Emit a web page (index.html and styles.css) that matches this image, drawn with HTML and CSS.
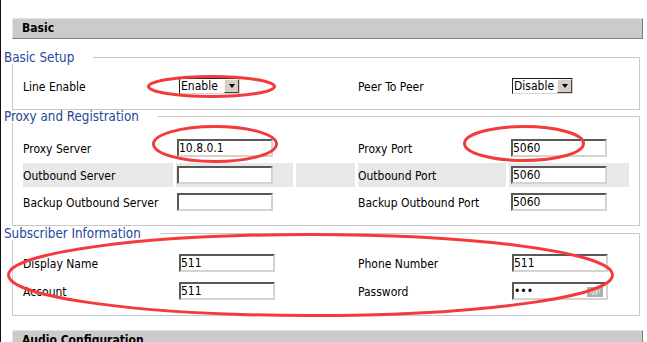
FILE: index.html
```html
<!DOCTYPE html>
<html lang="en">
  <head>
    <meta charset="UTF-8" />
    <meta name="viewport" content="width=device-width, initial-scale=1.0" />
    <title>Line Settings</title>
    <link rel="stylesheet" href="styles.css">
  </head>
  <body>
    <div class="page">
      <div class="bar">Basic</div>

      <!-- Basic setup -->
      <fieldset class="group">
        <legend>Basic Setup</legend>
        <table class="form">
          <colgroup>
            <col class="col-label"><col class="col-field"><col class="col-gap"><col class="col-label2"><col class="col-field2">
          </colgroup>
          <tr>
            <td class="label">Line Enable</td>
            <td class="field">
              <span class="combo"><span class="combo-value">Enable</span><span class="combo-btn"><span class="combo-arrow"></span></span></span>
            </td>
            <td></td>
            <td class="label">Peer To Peer</td>
            <td class="field">
              <span class="combo"><span class="combo-value">Disable</span><span class="combo-btn"><span class="combo-arrow"></span></span></span>
            </td>
          </tr>
        </table>
      </fieldset>

      <!-- Proxy and registration -->
      <fieldset class="group group-proxy">
        <legend>Proxy and Registration</legend>
        <table class="form form-proxy">
          <colgroup>
            <col class="col-label"><col class="col-field"><col class="col-gap"><col class="col-label2"><col class="col-field2">
          </colgroup>
          <tr>
            <td class="label">Proxy Server</td>
            <td class="field"><input class="text" type="text" value="10.8.0.1"></td>
            <td></td>
            <td class="label">Proxy Port</td>
            <td class="field"><input class="text" type="text" value="5060"></td>
          </tr>
          <tr class="alt">
            <td class="label">Outbound Server</td>
            <td class="field"><input class="text" type="text" value=""></td>
            <td></td>
            <td class="label">Outbound Port</td>
            <td class="field"><input class="text" type="text" value="5060"></td>
          </tr>
          <tr>
            <td class="label">Backup Outbound Server</td>
            <td class="field"><input class="text" type="text" value=""></td>
            <td></td>
            <td class="label">Backup Outbound Port</td>
            <td class="field"><input class="text" type="text" value="5060"></td>
          </tr>
        </table>
      </fieldset>

      <!-- Subscriber information -->
      <fieldset class="group group-sub">
        <legend>Subscriber Information</legend>
        <table class="form form-loose">
          <colgroup>
            <col class="col-label"><col class="col-field"><col class="col-gap"><col class="col-label2"><col class="col-field2">
          </colgroup>
          <tr>
            <td class="label">Display Name</td>
            <td class="field"><input class="text" type="text" value="511"></td>
            <td></td>
            <td class="label">Phone Number</td>
            <td class="field"><input class="text" type="text" value="511"></td>
          </tr>
          <tr>
            <td class="label">Account</td>
            <td class="field"><input class="text" type="text" value="511"></td>
            <td></td>
            <td class="label">Password</td>
            <td class="field">
              <span class="pw">
                <input class="text" type="password" value="511">
                <svg class="pw-key" width="16" height="10" viewBox="0 0 16 10">
                  <rect width="16" height="10" fill="#b0b0b0" />
                  <path d="M3 3h10M3 5h10M5 7h6" stroke="#fff" stroke-width="1" stroke-dasharray="2 1" />
                </svg>
              </span>
            </td>
          </tr>
        </table>
      </fieldset>

      <div class="bar bar-next">Audio Configuration</div>
    </div>

    <!-- red highlight marks drawn over the form -->
    <svg class="marks" width="647" height="342" viewBox="0 0 647 342">
      <ellipse cx="211.5" cy="86.5" rx="63" ry="10" />
      <ellipse cx="215" cy="144" rx="61.5" ry="17.5" />
      <ellipse cx="524" cy="143.5" rx="59.5" ry="17" />
      <ellipse cx="310.5" cy="275" rx="302" ry="40.5" />
    </svg>
  </body>
</html>
```

FILE: styles.css
```css
body {
  margin: 0;
  position: relative;
  font-family: "DejaVu Sans Condensed", "DejaVu Sans", Verdana, sans-serif;
  font-size: 12px;
  color: #000;
  background-color: #fff;
  overflow: hidden;
}
.page {
  border-left: 1px solid #111;
  min-height: 342px;
  padding-top: 18px;
  box-sizing: border-box;
}

/* grey section bars */
.bar {
  margin: 0 4px 0 11px;
  height: 19px;
  line-height: 19px;
  padding-left: 9px;
  background-color: #cbcbcb;
  border: 1px solid;
  border-color: #e4e4e4 #7c7c7c #7c7c7c #e4e4e4;
  font-weight: bold;
  font-size: 12px;
}
.bar-next {
  margin-top: 14px;
}

/* fieldsets */
.group {
  margin: 12px 7px 0 11px;
  padding: 7px 7px 8px 7px;
  border: 1px solid #c8c8c8;
  min-width: 0;
}
.group legend {
  margin-left: -16px;
  padding: 0 19px 0 0;
  font-size: 13.3px;
  line-height: 13px;
  color: #27469a;
}
.group-proxy {
  margin-top: 0;
  padding-top: 10px;
}
.group-sub {
  margin-top: 1px;
}

/* form tables */
.form {
  width: 612px;
  table-layout: fixed;
  border-collapse: separate;
  border-spacing: 3px;
}
.form-loose {
  border-spacing: 3px 4px;
}
.col-label { width: 150px; }
.col-field { width: 117px; }
.col-gap { width: 59px; }
.col-label2 { width: 148px; }
.col-field2 { width: 120px; }
.form td {
  height: 24px;
  padding: 0;
  vertical-align: middle;
  white-space: nowrap;
}
.form td.label {
  padding-top: 1px;
  box-sizing: border-box;
}
.form td.field {
  padding-left: 3px;
}
.form-proxy td.field {
  padding-left: 1px;
}
.form-proxy td.field:last-child {
  padding-left: 2px;
}
.form tr.alt td {
  background-color: #e8e8e8;
}

/* text inputs */
.text {
  display: block;
  box-sizing: border-box;
  width: 96px;
  height: 18px;
  margin: 0;
  padding: 0;
  border: 2px solid;
  border-color: #585858 #d6d3cc #d6d3cc #585858;
  background-color: #fff;
  font-family: "DejaVu Sans Condensed", "DejaVu Sans", Verdana, sans-serif;
  font-size: 12px;
  line-height: 14px;
  color: #000;
  outline: none;
}
.pw {
  position: relative;
  display: block;
  width: 96px;
}
.pw-key {
  position: absolute;
  right: 5px;
  top: 5px;
}

/* old-style drop-down */
.combo {
  display: flex;
  box-sizing: border-box;
  width: 61px;
  height: 16px;
  border: 1px solid;
  border-color: #1e1e1e #d6d3cc #d6d3cc #1e1e1e;
  background-color: #fff;
}
.combo-value {
  flex: 1;
  padding-left: 1px;
  line-height: 14px;
  font-size: 12px;
}
.combo-btn {
  display: flex;
  align-items: center;
  justify-content: center;
  box-sizing: border-box;
  width: 15px;
  height: 14px;
  background-color: #d4d0c8;
  border: 1px solid;
  border-color: #f4f4f4 #404040 #404040 #f4f4f4;
}
.combo-arrow {
  width: 0;
  height: 0;
  border-left: 3.5px solid transparent;
  border-right: 3.5px solid transparent;
  border-top: 4px solid #000;
}

/* red annotation overlay */
.marks {
  position: absolute;
  left: 0;
  top: 0;
  pointer-events: none;
}
.marks ellipse {
  fill: none;
  stroke: #f43a3a;
  stroke-width: 3;
}
```
